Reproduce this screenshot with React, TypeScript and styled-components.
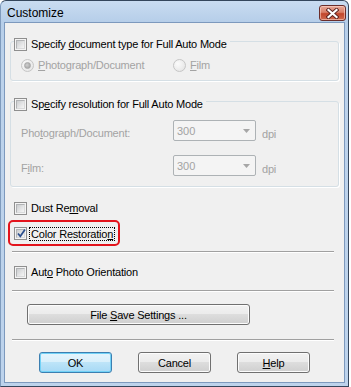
import React from 'react';
import styled, { createGlobalStyle } from 'styled-components';

const GlobalStyle = createGlobalStyle`
  html, body {
    margin: 0;
    padding: 0;
    background: #ffffff;
  }
  body {
    font-family: 'Liberation Sans', Arial, sans-serif;
    font-size: 11px;
  }
`;

const Window = styled.div`
  width: 349px;
  height: 387px;
  box-sizing: border-box;
  display: flex;
  flex-direction: column;
  border: 1px solid #34465c;
  border-left-color: #7f9bbd;
  border-radius: 6px 6px 0 0;
  background: linear-gradient(to bottom, #c9dcf1 0px, #b6cee9 21px, #bcd2eb 60px, #bdd3ec 100%);
`;

const TitleBar = styled.div`
  height: 21px;
  display: flex;
  justify-content: space-between;
  padding: 0 2px 0 6px;
`;

const Title = styled.span`
  font-size: 12px;
  line-height: 14px;
  margin-top: 5px;
  color: #000;
`;

const CloseButton = styled.div`
  width: 27px;
  height: 16px;
  margin-top: 4px;
  box-sizing: border-box;
  display: flex;
  align-items: center;
  justify-content: center;
  border: 1px solid #6b2d2a;
  border-radius: 3px;
  background: linear-gradient(to bottom, #e8a797 0%, #d98068 45%, #c2462b 55%, #cf6a4f 100%);
  box-shadow: inset 0 0 0 1px rgba(255, 220, 210, 0.55);
`;

const Client = styled.div`
  flex: 1;
  margin: 0 3px 3px 3px;
  border: 1px solid #7d99bd;
  background: #f0f0f0;
  padding: 0 5px;
  display: flex;
  flex-direction: column;
`;

const GroupBox = styled.div<{ $top: number; $padBottom: number }>`
  margin-top: ${(p) => p.$top}px;
  border: 1px solid #d5dfe5;
  border-radius: 3px;
  padding-bottom: ${(p) => p.$padBottom}px;
  box-shadow: 1px 1px 0 #ffffff;
`;

const GroupHeader = styled.div`
  display: flex;
  align-items: center;
  height: 13px;
  margin: -4px 0 0 3px;
  background: #f0f0f0;
  width: max-content;
  padding-right: 3px;
`;

const CheckRow = styled.div<{ $top: number }>`
  display: flex;
  align-items: center;
  height: 13px;
  margin: ${(p) => p.$top}px 0 0 4px;
`;

const CheckBox = styled.span`
  position: relative;
  width: 13px;
  height: 13px;
  flex: none;
  box-sizing: border-box;
  border: 1px solid #8f8f8f;
  background: #f4f4f4;
  display: flex;
  align-items: center;
  justify-content: center;

  &::before {
    content: '';
    width: 9px;
    height: 9px;
    box-sizing: border-box;
    border: 1px solid #b1b3b5;
    border-right-color: #d9dadb;
    border-bottom-color: #d9dadb;
    background: linear-gradient(135deg, #cbcdcf 0%, #e3e4e5 55%, #f5f5f5 100%);
  }

  svg {
    position: absolute;
    left: 1px;
    top: 0px;
  }
`;

const Label = styled.span<{ $disabled?: boolean; $gap?: number }>`
  margin-left: ${(p) => p.$gap ?? 4}px;
  color: ${(p) => (p.$disabled ? '#a3a3a3' : '#000000')};
  line-height: 13px;
  letter-spacing: -0.2px;
  white-space: nowrap;
`;

const Key = styled.u`
  text-decoration: underline;
  text-underline-offset: 1px;
`;

const RadioRow = styled.div`
  display: flex;
  align-items: center;
  height: 13px;
  margin-top: 8px;
  padding-left: 10px;
`;

const RadioItem = styled.div<{ $width?: number }>`
  display: flex;
  align-items: center;
  width: ${(p) => (p.$width ? `${p.$width}px` : 'auto')};
`;

const Radio = styled.span<{ $checked?: boolean }>`
  width: 13px;
  height: 13px;
  flex: none;
  box-sizing: border-box;
  border-radius: 50%;
  border: 1px solid #c6c6c6;
  background: radial-gradient(circle at 35% 35%, #fbfbfb 0%, #e9e9e9 70%, #dcdcdc 100%);
  display: flex;
  align-items: center;
  justify-content: center;

  &::after {
    content: '';
    display: ${(p) => (p.$checked ? 'block' : 'none')};
    width: 5px;
    height: 5px;
    border-radius: 50%;
    background: radial-gradient(circle at 40% 40%, #d0d0d0 0%, #9c9c9c 100%);
    border: 1px solid #a8a8a8;
  }
`;

const FieldRow = styled.div<{ $top: number }>`
  display: flex;
  align-items: center;
  height: 21px;
  margin-top: ${(p) => p.$top}px;
  padding-left: 10px;
`;

const FieldLabel = styled.span`
  width: 152px;
  color: #a3a3a3;
  letter-spacing: -0.2px;
  margin-top: 4px;
`;

const Combo = styled.div`
  width: 83px;
  height: 21px;
  box-sizing: border-box;
  border: 1px solid #adb2b5;
  border-radius: 2px;
  background: #f4f4f4;
  display: flex;
  align-items: center;
  justify-content: space-between;
  padding: 0 5px 0 3px;
  color: #a3a3a3;
`;

const Unit = styled.span`
  margin-left: 6px;
  margin-top: 6px;
  color: #a3a3a3;
  letter-spacing: -0.2px;
`;

const Separator = styled.div<{ $top: number }>`
  margin: ${(p) => p.$top}px 5px 0 2px;
  height: 1px;
  background: #a0a0a0;
  border-bottom: 1px solid #ffffff;
`;

const Highlight = styled.div`
  display: flex;
  align-items: center;
  align-self: flex-start;
  width: 112px;
  height: 26px;
  box-sizing: border-box;
  margin: 5px 0 0 -2px;
  padding: 1px 0 0 4px;
  border: 2px solid #e3141c;
  border-radius: 5px;
`;

const FocusLabel = styled.span`
  margin-left: 2px;
  padding: 0 1px;
  line-height: 12px;
  border: 1px dotted #000000;
  letter-spacing: -0.2px;
  white-space: nowrap;
`;

const PushButton = styled.div<{ $width: number; $isDefault?: boolean }>`
  width: ${(p) => p.$width}px;
  height: 21px;
  box-sizing: border-box;
  display: flex;
  align-items: center;
  justify-content: center;
  border: 1px solid ${(p) => (p.$isDefault ? '#3c7fb1' : '#707070')};
  border-radius: 3px;
  color: #000;
  letter-spacing: -0.2px;
  background: ${(p) =>
    p.$isDefault
      ? 'linear-gradient(to bottom, #e5f5fd 0%, #d8effb 50%, #bde4f8 50%, #a7d9f5 100%)'
      : 'linear-gradient(to bottom, #f2f2f2 0%, #ebebeb 50%, #dddddd 50%, #cfcfcf 100%)'};
  box-shadow: inset 0 0 0 1px ${(p) => (p.$isDefault ? '#72d2f7' : '#fcfcfc')};
`;

const ButtonText = styled.span`
  white-space: pre;
`;

const WideButtonRow = styled.div`
  display: flex;
  margin: 12px 0 0 17px;
`;

const ButtonRow = styled.div`
  display: flex;
  gap: 26px;
  margin: 11px 0 0 29px;
`;

const CheckMark = () => (
  <svg width="11" height="11" viewBox="0 0 11 11">
    <path d="M2 5.5 L4.3 8.3 L9 1.5" fill="none" stroke="#2b4f8e" strokeWidth="1.7" />
  </svg>
);

const ComboArrow = () => (
  <svg width="7" height="4" viewBox="0 0 7 4">
    <path d="M0 0 H7 L3.5 4 Z" fill="#a6a6a6" />
  </svg>
);

const CloseGlyph = () => (
  <svg width="13" height="11" viewBox="0 0 13 11">
    <path d="M2.5 2 L10.5 9 M10.5 2 L2.5 9" stroke="#5a2320" strokeWidth="4" strokeLinecap="square" />
    <path d="M2.5 2 L10.5 9 M10.5 2 L2.5 9" stroke="#ffffff" strokeWidth="2.2" strokeLinecap="square" />
  </svg>
);

const App: React.FC = () => {
  return (
    <>
      <GlobalStyle />
      <Window>
        <TitleBar>
          <Title>Customize</Title>
          <CloseButton>
            <CloseGlyph />
          </CloseButton>
        </TitleBar>
        <Client>
          <GroupBox $top={18} $padBottom={8}>
            <GroupHeader>
              <CheckBox />
              <Label>
                Specify <Key>d</Key>ocument type for Full Auto Mode
              </Label>
            </GroupHeader>
            <RadioRow>
              <RadioItem $width={152}>
                <Radio $checked />
                <Label $disabled>
                  <Key>P</Key>hotograph/Document
                </Label>
              </RadioItem>
              <RadioItem>
                <Radio />
                <Label $disabled>
                  <Key>F</Key>ilm
                </Label>
              </RadioItem>
            </RadioRow>
          </GroupBox>

          <GroupBox $top={20} $padBottom={10}>
            <GroupHeader>
              <CheckBox />
              <Label>
                Sp<Key>e</Key>cify resolution for Full Auto Mode
              </Label>
            </GroupHeader>
            <FieldRow $top={9}>
              <FieldLabel>
                Pho<Key>t</Key>ograph/Document:
              </FieldLabel>
              <Combo>
                300
                <ComboArrow />
              </Combo>
              <Unit>dpi</Unit>
            </FieldRow>
            <FieldRow $top={14}>
              <FieldLabel>
                F<Key>i</Key>lm:
              </FieldLabel>
              <Combo>
                300
                <ComboArrow />
              </Combo>
              <Unit>dpi</Unit>
            </FieldRow>
          </GroupBox>

          <CheckRow $top={15}>
            <CheckBox />
            <Label>
              Dust Re<Key>m</Key>oval
            </Label>
          </CheckRow>

          <Highlight>
            <CheckBox>
              <CheckMark />
            </CheckBox>
            <FocusLabel>
              Color Restoratio<Key>n</Key>
            </FocusLabel>
          </Highlight>

          <Separator $top={5} />

          <CheckRow $top={13}>
            <CheckBox />
            <Label>
              Aut<Key>o</Key> Photo Orientation
            </Label>
          </CheckRow>

          <Separator $top={11} />

          <WideButtonRow>
            <PushButton $width={223}>
              <ButtonText>
                File <Key>S</Key>ave Settings ...
              </ButtonText>
            </PushButton>
          </WideButtonRow>

          <Separator $top={14} />

          <ButtonRow>
            <PushButton $width={73} $isDefault>
              <ButtonText>OK</ButtonText>
            </PushButton>
            <PushButton $width={73}>
              <ButtonText>Cancel</ButtonText>
            </PushButton>
            <PushButton $width={73}>
              <ButtonText>
                <Key>H</Key>elp
              </ButtonText>
            </PushButton>
          </ButtonRow>
        </Client>
      </Window>
    </>
  );
};

export default App;
